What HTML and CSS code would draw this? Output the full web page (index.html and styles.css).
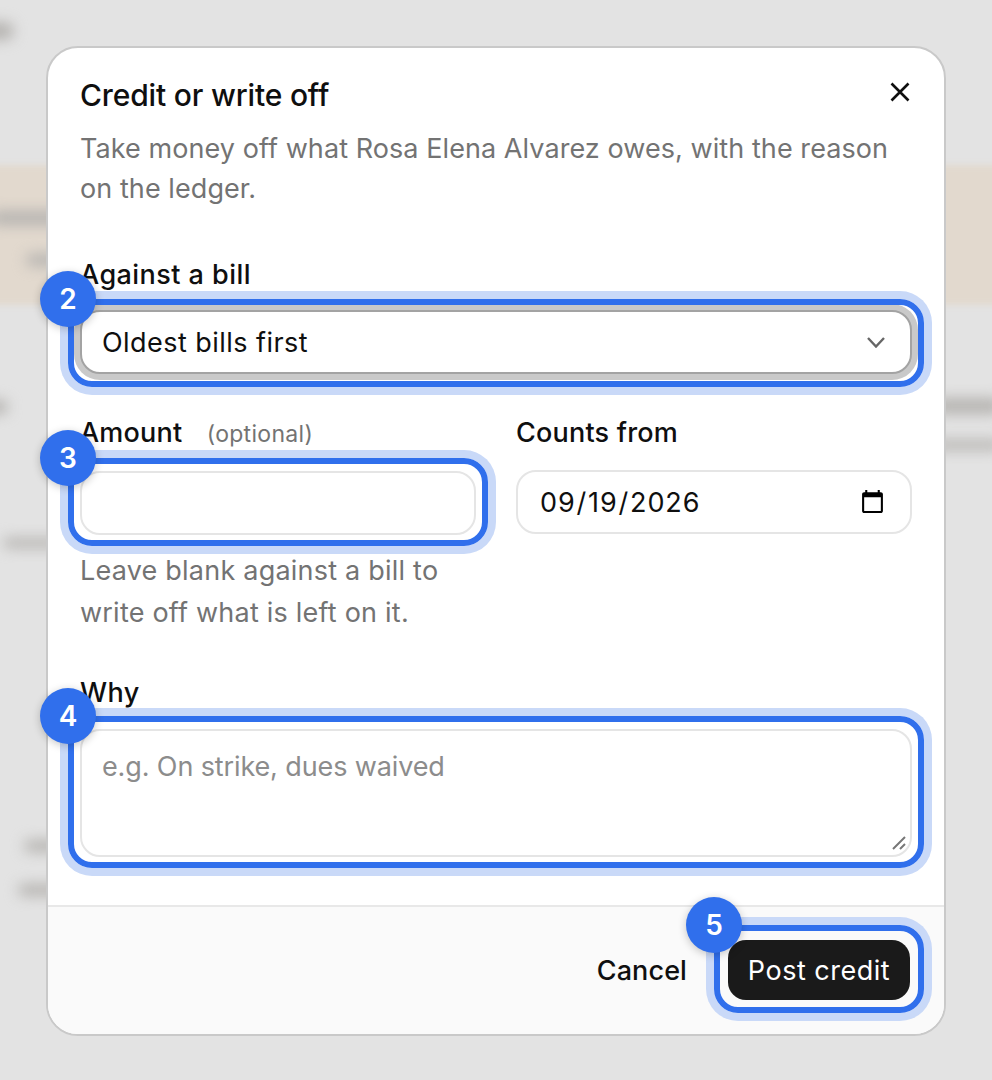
FILE: index.html
```html
<!DOCTYPE html>
<html lang="en">
<head>
<meta charset="utf-8">
<title>Credit or write off</title>
<link rel="stylesheet" href="styles.css">
</head>
<body>
<div class="backdrop" aria-hidden="true">
  <div class="band"></div>
  <i class="blob b1"></i><i class="blob b2"></i><i class="blob b3"></i><i class="blob b4"></i>
  <i class="blob b5"></i><i class="blob b6"></i><i class="blob b7"></i><i class="blob b8"></i><i class="blob b9"></i>
</div>
<main class="modal">
  <header class="head">
    <div class="title-row">
      <h2 class="title">Credit or write off</h2>
      <svg class="close" viewBox="0 0 20 20" aria-label="Close"><path d="M1.5 1.5 18.5 18.5M18.5 1.5 1.5 18.5"/></svg>
    </div>
    <p class="sub">Take money off what Rosa Elena Alvarez owes, with the reason on the ledger.</p>
  </header>
  <form class="body">
    <label class="label">Against a bill</label>
    <div class="control">
      <select class="field select focused"><option>Oldest bills first</option></select>
      <svg class="chev" viewBox="0 0 18 11"><path d="M1 1 9 9.5 17 1"/></svg>
      <div class="spot spot-a"><span class="badge">2</span></div>
    </div>
    <div class="row">
      <div class="col">
        <label class="label label-row">Amount <span class="opt">(optional)</span></label>
        <div class="control">
          <input class="field" type="text">
          <div class="spot spot-b"><span class="badge">3</span></div>
        </div>
        <p class="help">Leave blank against a bill to write off what is left on it.</p>
      </div>
      <div class="col">
        <label class="label label-row">Counts from</label>
        <input class="field date" type="date" value="2026-09-19">
      </div>
    </div>
    <label class="label why">Why</label>
    <div class="control">
      <textarea class="field area" placeholder="e.g. On strike, dues waived"></textarea>
      <svg class="grip" viewBox="0 0 16 16"><path d="M2 14 14 2M9 14 14 9"/></svg>
      <div class="spot spot-b"><span class="badge">4</span></div>
    </div>
  </form>
  <footer class="foot">
    <button class="cancel" type="button">Cancel</button>
    <div class="control">
      <button class="post" type="button">Post credit</button>
      <div class="spot spot-c"><span class="badge">5</span></div>
    </div>
  </footer>
</main>
</body>
</html>
```
FILE: styles.css
```css
* { box-sizing: border-box; }
html, body { margin: 0; height: 100%; }
body {
  position: relative;
  height: 1080px;
  overflow: hidden;
  background: #e3e3e3;
  font-family: Inter, "Liberation Sans", sans-serif;
  color: #0f0f0f;
  padding-top: 46px;
}
.backdrop { position: absolute; inset: 0; overflow: hidden; }
.band { position: absolute; left: -20px; right: -20px; top: 165px; height: 140px; background: #e2d9ce; filter: blur(3px); }
.blob { position: absolute; display: block; background: #b5b3b0; border-radius: 20px; filter: blur(7px); }
.b1 { left: -20px; top: 22px; width: 34px; height: 18px; }
.b2 { left: -10px; top: 211px; width: 80px; height: 14px; }
.b3 { left: 26px; top: 254px; width: 40px; height: 12px; }
.b4 { left: -20px; top: 400px; width: 28px; height: 14px; }
.b5 { left: 3px; top: 538px; width: 60px; height: 10px; }
.b6 { left: 24px; top: 840px; width: 40px; height: 12px; }
.b7 { left: 18px; top: 884px; width: 50px; height: 12px; }
.b8 { right: -10px; top: 398px; width: 70px; height: 16px; }
.b9 { right: -10px; top: 440px; width: 70px; height: 10px; }

.modal {
  position: relative;
  width: 900px;
  height: 990px;
  margin: 0 auto;
  background: #fff;
  border: 2px solid #c9c9c9;
  border-radius: 32px;
  display: flex;
  flex-direction: column;
}
.head { padding: 32px 32px 0; }
.title-row { display: flex; justify-content: space-between; align-items: flex-start; }
.title { margin: 0; font-size: 30px; line-height: 30px; font-weight: 500; letter-spacing: -.17px; }
.close { width: 20px; height: 20px; margin: 2px 2px 0 0; }
.close path { fill: none; stroke: #0f0f0f; stroke-width: 2.6; }
.sub { margin: 19px 0 0; font-size: 27px; line-height: 40px; color: #737373; letter-spacing: .07px; }
.body { padding: 46px 32px 0; flex: 1; }
.label { display: block; font-size: 27px; line-height: 40px; font-weight: 450; letter-spacing: .45px; margin-bottom: 15px; }
.label-row { margin-bottom: 17px; letter-spacing: .2px; }
.opt { font-size: 23px; font-weight: 400; color: #737373; margin-left: 17px; letter-spacing: .3px; }
.control { position: relative; }
.field {
  display: block;
  width: 100%;
  height: 64px;
  padding: 0 20px;
  border: 2px solid #e5e5e5;
  border-radius: 20px;
  background: #fff;
  font: 400 27px Inter, "Liberation Sans", sans-serif;
  color: #0f0f0f;
  outline: none;
  appearance: none;
}
.select.focused { border-color: #a3a3a3; box-shadow: 0 0 0 6px #c9c9c9; letter-spacing: .45px; }
.date { appearance: auto; padding: 0 22px 0 21px; letter-spacing: .85px; }
.chev { position: absolute; right: 27px; top: 27px; width: 18px; height: 11px; }
.chev path { fill: none; stroke: #666; stroke-width: 2.4; }
.row { display: grid; grid-template-columns: 396px 396px; gap: 40px; margin-top: 39px; }
.help { margin: 15px 0 0; font-size: 27px; line-height: 42px; color: #737373; letter-spacing: .22px; }
.why { margin-top: 39px; margin-bottom: 16px; }
.area { height: 128px; padding: 19px 20px; resize: none; letter-spacing: -.12px; }
.area::placeholder { color: #8c8c8c; opacity: 1; }
.grip { position: absolute; right: 5px; bottom: 6px; width: 16px; height: 16px; }
.grip path { fill: none; stroke: #777; stroke-width: 2; }
.foot {
  height: 129px;
  border-top: 2px solid #e8e8e8;
  background: #fafafa;
  border-radius: 0 0 30px 30px;
  padding: 33px 34px 34px;
  display: flex;
  justify-content: flex-end;
  align-items: flex-start;
  gap: 41px;
}
.cancel { height: 60px; padding: 0; border: 0; background: none; font: 450 27px Inter, "Liberation Sans", sans-serif; letter-spacing: .1px; color: #0f0f0f; }
.post { display: block; width: 182px; height: 60px; padding: 0; border: 0; border-radius: 18px; background: #1a1a1a; color: #fff; font: 400 27px Inter, "Liberation Sans", sans-serif; letter-spacing: .5px; }
.spot {
  position: absolute;
  border: 6px solid #306fec;
  border-radius: 24px;
  box-shadow: 0 0 0 8px #c9d9f8;
  pointer-events: none;
}
.spot-a { top: -11px; left: -12px; right: -12px; bottom: -13px; }
.spot-b { top: -13px; left: -12px; right: -12px; bottom: -11px; }
.spot-c { top: -15px; left: -14px; right: -14px; bottom: -13px; }
.badge {
  position: absolute;
  left: -34px;
  top: -34px;
  width: 56px;
  height: 56px;
  border-radius: 50%;
  background: #306fec;
  color: #fff;
  font-size: 28px;
  font-weight: 600;
  line-height: 56px;
  text-align: center;
  box-shadow: 0 2px 8px rgba(0,0,0,.22);
}
```
